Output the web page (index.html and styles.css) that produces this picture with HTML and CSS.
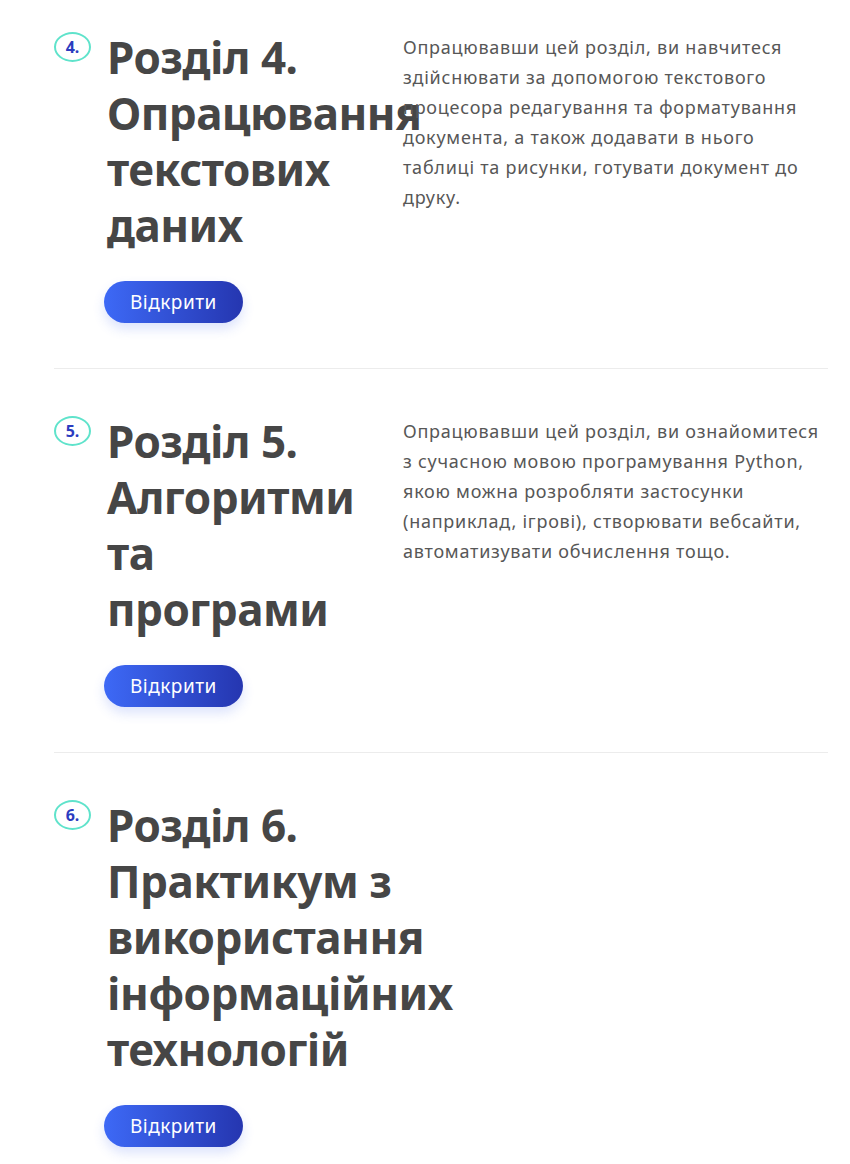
FILE: index.html
```html
<!DOCTYPE html>
<html>
<head>
    <title>Розділи</title>
    <link rel="stylesheet" href="styles.css">
</head>
<body>
    <div class="chapters">
        <div class="chapter">
            <span class="num">4.</span>
            <div class="head">
                <h2>Розділ 4. Опрацювання текстових даних</h2>
                <a class="btn" href="#">Відкрити</a>
            </div>
            <p class="desc">Опрацювавши цей розділ, ви навчитеся здійснювати за допомогою текстового процесора редагування та форматування документа, а також додавати в нього таблиці та рисунки, готувати документ до друку.</p>
        </div>
        <div class="chapter">
            <span class="num">5.</span>
            <div class="head">
                <h2>Розділ 5. Алгоритми та програми</h2>
                <a class="btn" href="#">Відкрити</a>
            </div>
            <p class="desc">Опрацювавши цей розділ, ви ознайомитеся з сучасною мовою програмування Python, якою можна розробляти застосунки (наприклад, ігрові), створювати вебсайти, автоматизувати обчислення тощо.</p>
        </div>
        <div class="chapter solo">
            <span class="num">6.</span>
            <div class="head">
                <h2>Розділ 6. Практикум з використання інформаційних технологій</h2>
                <a class="btn" href="#">Відкрити</a>
            </div>
        </div>
    </div>
</body>
</html>
```

FILE: styles.css
```css
body {
    margin: 0;
    background: #fff;
    font-family: "Noto Sans", Arial, sans-serif;
}
.chapters {
    width: 774px;
    padding: 29px 0 0 54px;
}
.chapter {
    display: grid;
    grid-template-columns: 50px 299px 1fr;
    padding-bottom: 45px;
    margin-bottom: 44px;
    border-bottom: 1px solid #ececec;
}
.chapter:last-child {
    border-bottom: none;
}
.num {
    box-sizing: border-box;
    width: 37px;
    height: 30px;
    margin-top: 3px;
    border: 2px solid #5fe3cb;
    border-radius: 50%;
    color: #2b3cc0;
    font-size: 16px;
    font-weight: 700;
    line-height: 26px;
    text-align: center;
}
h2 {
    width: 262px;
    margin: 0 0 0 3px;
    color: #464646;
    font-size: 44px;
    font-weight: 700;
    line-height: 56px;
    letter-spacing: -0.5px;
}
/* no description beside it, so the title may run a bit wider */
.solo h2 {
    width: 300px;
}
.btn {
    display: inline-block;
    margin-top: 28px;
    padding: 0 26px;
    height: 42px;
    line-height: 42px;
    border-radius: 21px;
    background: linear-gradient(90deg, #3d69f6, #2536b0);
    box-shadow: 0 6px 12px rgba(60, 100, 240, 0.18);
    color: #fff;
    font-size: 19px;
    letter-spacing: 0.5px;
    text-decoration: none;
}
.desc {
    margin: 3px 0 0;
    color: #575757;
    font-size: 18px;
    line-height: 30px;
    letter-spacing: 0.75px;
}
```
